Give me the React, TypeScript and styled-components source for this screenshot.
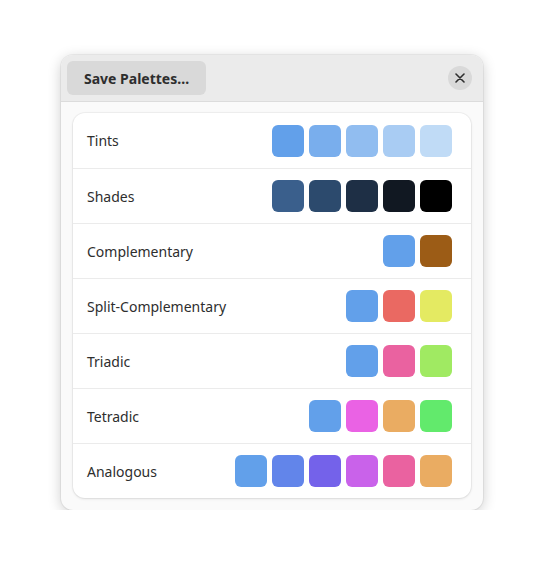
import React from 'react';
import styled, { createGlobalStyle } from 'styled-components';

const GlobalStyle = createGlobalStyle`
  html, body {
    margin: 0;
    padding: 0;
    background: #ffffff;
  }
  body {
    font-family: "Noto Sans", "DejaVu Sans", sans-serif;
  }
`;

type Palette = { name: string; colors: string[] };

const palettes: Palette[] = [
  { name: 'Tints', colors: ['#62a0ea', '#79aeed', '#91bdf0', '#a9ccf3', '#c0dbf6'] },
  { name: 'Shades', colors: ['#3a5f8c', '#2c4a6d', '#1e2f45', '#111822', '#000000'] },
  { name: 'Complementary', colors: ['#62a0ea', '#9c5c16'] },
  { name: 'Split-Complementary', colors: ['#62a0ea', '#ea6962', '#e4ea62'] },
  { name: 'Triadic', colors: ['#62a0ea', '#ea62a0', '#a0ea62'] },
  { name: 'Tetradic', colors: ['#62a0ea', '#ea62e4', '#eaac62', '#62ea6c'] },
  { name: 'Analogous', colors: ['#62a0ea', '#6285ea', '#7462ea', '#c962ea', '#ea62a0', '#eaac62'] },
];

const App: React.FC = () => {
  return (
    <Page>
      <GlobalStyle />
      <Window>
        <HeaderBar>
          <SaveButton>Save Palettes…</SaveButton>
          <CloseButton aria-label="Close">
            <svg width="10" height="10" viewBox="0 0 10 10">
              <path d="M1 1 L9 9 M9 1 L1 9" stroke="#2e2e2e" strokeWidth="1.6" strokeLinecap="round" />
            </svg>
          </CloseButton>
        </HeaderBar>
        <Body>
          <ListBox>
            {palettes.map((p) => (
              <Row key={p.name}>
                <Label>{p.name}</Label>
                <Swatches>
                  {p.colors.map((c, i) => (
                    <Swatch key={i} $color={c} />
                  ))}
                </Swatches>
              </Row>
            ))}
          </ListBox>
        </Body>
      </Window>
    </Page>
  );
};

const Page = styled.div`
  padding: 55px 0 0 61px;
`;

const Window = styled.div`
  width: 422px;
  height: 455px;
  box-sizing: border-box;
  background: #fafafa;
  border-radius: 12px;
  overflow: hidden;
  box-shadow: 0 0 0 1px rgba(0, 0, 0, 0.05), 0 3px 14px rgba(0, 0, 0, 0.2);
  display: flex;
  flex-direction: column;
`;

const HeaderBar = styled.div`
  height: 46px;
  background: #ebebeb;
  border-bottom: 1px solid #dcdcdc;
  display: flex;
  align-items: center;
  justify-content: space-between;
  padding: 0 11px 0 6px;
`;

const SaveButton = styled.button`
  height: 34px;
  padding: 0 17px;
  border: none;
  border-radius: 6px;
  background: #d9d9d9;
  color: #2e2e2e;
  font-family: "Noto Sans", "DejaVu Sans", sans-serif;
  font-weight: 700;
  font-size: 14px;
`;

const CloseButton = styled.button`
  width: 24px;
  height: 24px;
  border: none;
  border-radius: 50%;
  background: #d9d9d9;
  padding: 0;
  display: flex;
  align-items: center;
  justify-content: center;
`;

const Body = styled.div`
  padding: 11px 12px 12px;
`;

const ListBox = styled.div`
  background: #ffffff;
  border-radius: 12px;
  box-shadow: 0 0 0 1px rgba(0, 0, 0, 0.04), 0 1px 3px rgba(0, 0, 0, 0.1);
  overflow: hidden;
`;

const Row = styled.div`
  height: 55px;
  box-sizing: border-box;
  display: flex;
  align-items: center;
  justify-content: space-between;
  padding: 0 19px 0 14px;
  & + & {
    border-top: 1px solid #ebebeb;
  }
`;

const Label = styled.span`
  font-size: 14px;
  color: #2e2e2e;
`;

const Swatches = styled.div`
  display: flex;
  gap: 5px;
`;

const Swatch = styled.div<{ $color: string }>`
  width: 32px;
  height: 32px;
  border-radius: 6px;
  background: ${(p) => p.$color};
`;

export default App;
